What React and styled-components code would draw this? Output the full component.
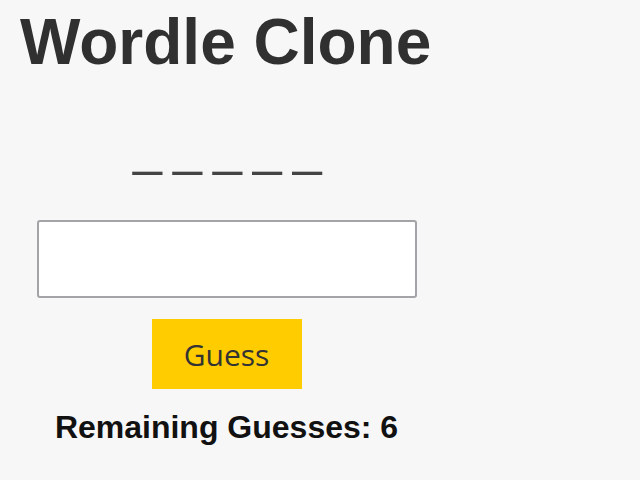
import styled, { createGlobalStyle } from "styled-components";

const GlobalStyle = createGlobalStyle`
    html, body {
        margin: 0;
        padding: 0;
        background: #f7f7f7;
    }
    body {
        font-family: "Liberation Sans", Arial, sans-serif;
    }
`

const Game = styled.div`
    display: flex;
    flex-direction: column;
    align-items: center;
    width: 413px;
    padding: 10px 0 0 20px;
`

const Title = styled.h1`
    margin: 0;
    align-self: flex-start;
    font-size: 64px;
    line-height: 64px;
    font-weight: 700;
    white-space: nowrap;
    color: #303030;
`

const Slots = styled.p`
    margin: 47px 0 0;
    font-size: 52px;
    line-height: 52px;
    letter-spacing: -1.7px;
    color: #444444;
    white-space: pre;
`

const GuessInput = styled.input`
    box-sizing: border-box;
    margin-top: 47px;
    width: 380px;
    height: 78px;
    border: 2px solid #a3a3a8;
    border-radius: 3px;
    background: #ffffff;
    font-size: 32px;
    padding: 0 12px;
    outline: none;
`

const GuessButton = styled.button`
    margin-top: 21px;
    width: 150px;
    height: 70px;
    border: none;
    background: #ffcc00;
    color: #333333;
    font-family: "Open Sans", "Noto Sans", sans-serif;
    font-size: 30px;
    cursor: pointer;
`

const Remaining = styled.p`
    margin: 20px 0 0;
    font-size: 32px;
    line-height: 36px;
    font-weight: 700;
    white-space: nowrap;
    color: #111111;
`

const App = () => {
    const guesses = 6
    return (
        <>
            <GlobalStyle />
            <Game>
                <Title>Wordle Clone</Title>
                <Slots>_ _ _ _ _</Slots>
                <GuessInput type="text" />
                <GuessButton>Guess</GuessButton>
                <Remaining>Remaining Guesses: {guesses}</Remaining>
            </Game>
        </>
    )
}

export default App
